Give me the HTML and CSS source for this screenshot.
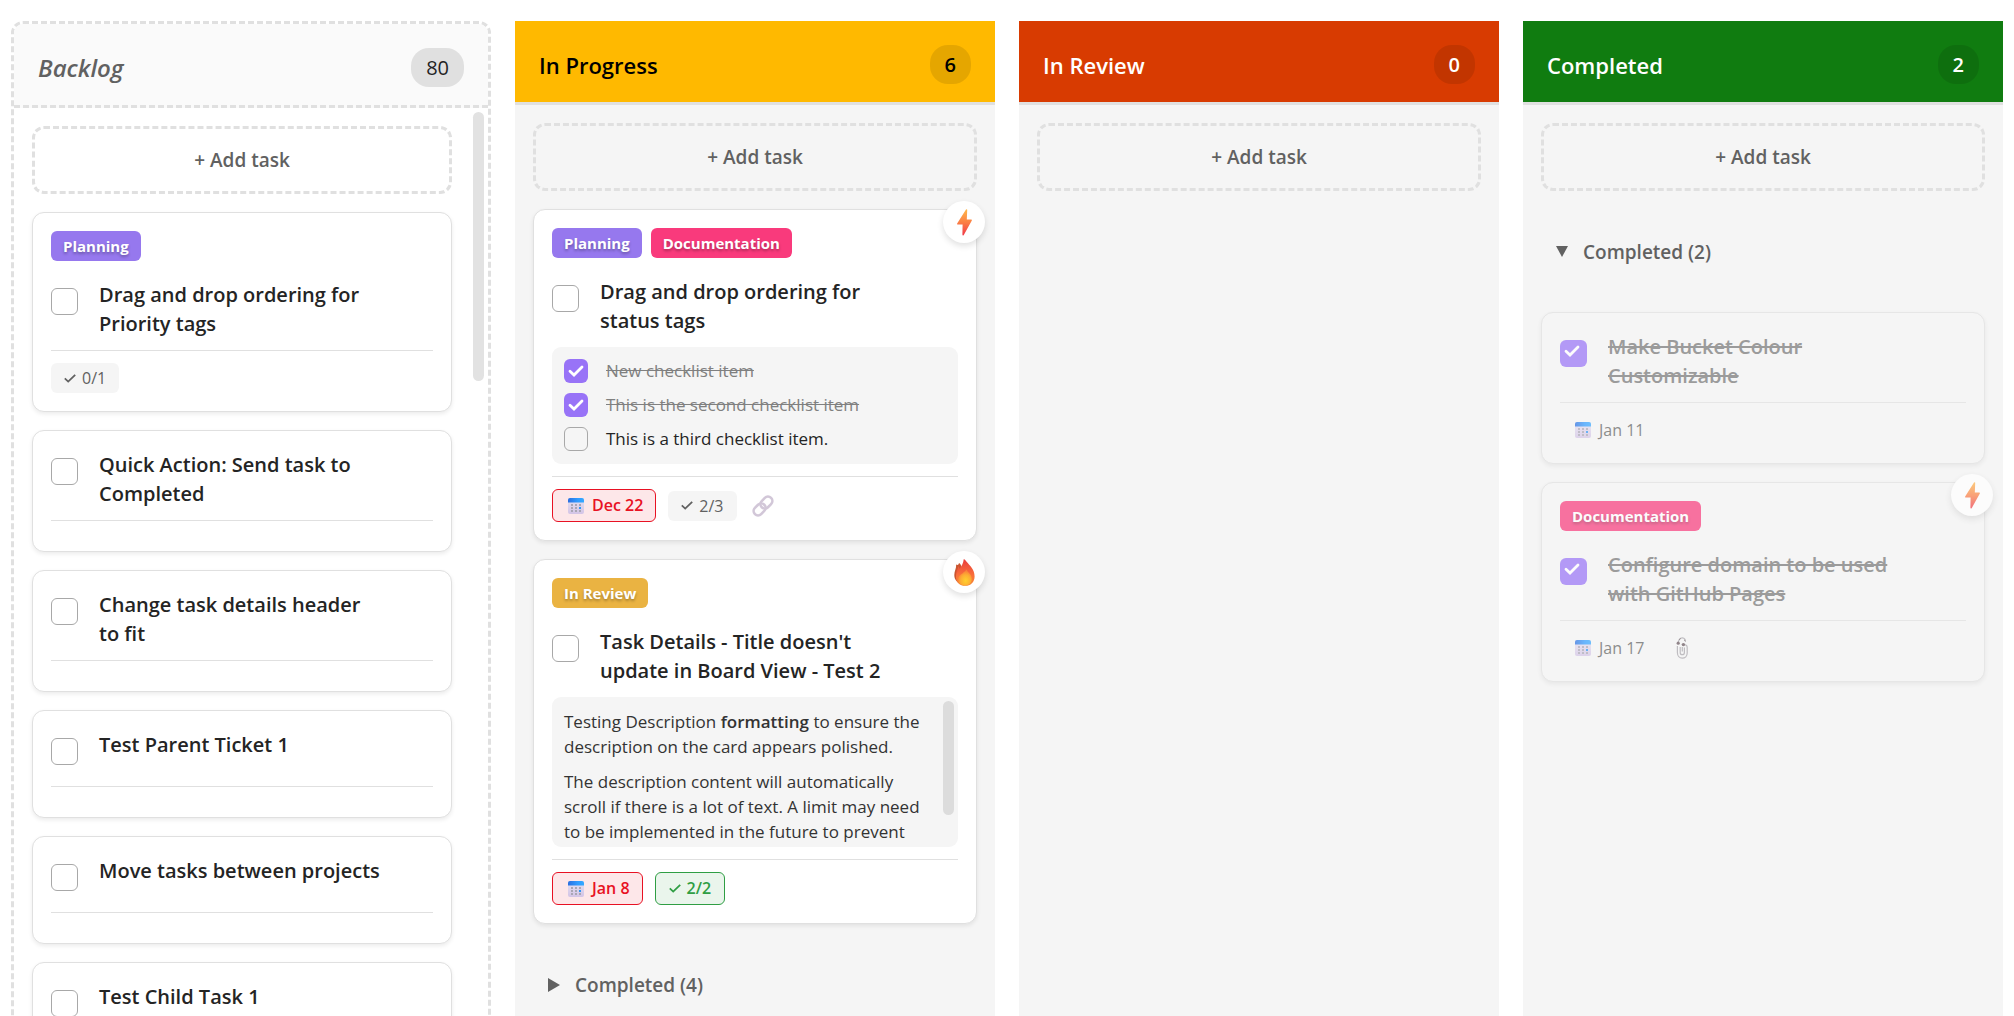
FILE: index.html
```html
<!DOCTYPE html>
<html lang="en">
<head>
    <meta charset="UTF-8">
    <meta name="viewport" content="width=device-width, initial-scale=1.0">
    <title>Task Board</title>
    <link rel="stylesheet" href="styles.css">
</head>
<body>

<!-- Shared icons -->
<svg class="sprite" aria-hidden="true">
    <defs>
        <linearGradient id="boltFill" x1="0" y1="0" x2="0" y2="1">
            <stop offset="0" stop-color="#ffb84a"/>
            <stop offset="0.5" stop-color="#fb7f45"/>
            <stop offset="1" stop-color="#f0384a"/>
        </linearGradient>
        <linearGradient id="flameFill" x1="0" y1="0" x2="0" y2="1">
            <stop offset="0" stop-color="#ea3c3c"/>
            <stop offset="0.6" stop-color="#f9703a"/>
            <stop offset="1" stop-color="#f58a35"/>
        </linearGradient>
        <radialGradient id="flameCore" cx="0.55" cy="0.7" r="0.6">
            <stop offset="0" stop-color="#ffd02f"/>
            <stop offset="0.6" stop-color="#fdae33"/>
            <stop offset="1" stop-color="#fb8238"/>
        </radialGradient>
        <linearGradient id="calTop" x1="0" y1="0" x2="1" y2="0">
            <stop offset="0" stop-color="#2b6fe0"/>
            <stop offset="0.6" stop-color="#2f9bff"/>
            <stop offset="1" stop-color="#36a8ff"/>
        </linearGradient>
        <linearGradient id="calBody" x1="0" y1="0" x2="0" y2="1">
            <stop offset="0" stop-color="#e6e2f1"/>
            <stop offset="1" stop-color="#d3c4e6"/>
        </linearGradient>
    </defs>
    <symbol id="bolt" viewBox="0 0 15 27">
        <path fill="url(#boltFill)" d="M9 0.5 Q10.3 -0.3 10.2 1.2 L9.8 10.5 H14.2 Q15.4 10.6 14.7 11.8 L6.8 26 Q5.6 27.4 5.4 25.6 L5.6 15.6 H0.9 Q-0.3 15.5 0.3 14.3 Z"/>
    </symbol>
    <symbol id="flame" viewBox="0 0 21 27">
        <path fill="#c9552f" d="M5 4 C8 6 8 10 8 14 L8 25 C3 24 0.3 20.5 0.3 16 C0.3 12 2.4 9.5 2.2 5.6 C4 6.6 4.6 5.5 5 4 Z"/>
        <path fill="#ef5a3c" d="M4.2 7 C6 9 5.5 11 7 12 L7 22 C3 20 1.4 17 2.2 13.4 C2.6 11 4.5 9.5 4.2 7 Z"/>
        <path fill="url(#flameFill)" d="M9.7 0.2 C11 0 11.4 1.2 12.4 2.6 C16 7 20.6 10.6 20.6 17.4 C20.6 23 16.6 26.8 11.2 26.8 C5.8 26.8 2 23.4 2 18 C2 11.6 9.2 8.4 9.7 0.2 Z"/>
        <path fill="url(#flameCore)" d="M12.6 10.5 C13.4 13.4 17.8 15 17.8 20 C17.8 24 15 26.4 11 26.4 C7 26.4 4.2 24 4.2 20.4 C4.2 16 8 15.6 9.4 13.6 C10.2 12.6 11.6 12 12.6 10.5 Z"/>
    </symbol>
    <symbol id="calendar" viewBox="0 0 16 16">
        <rect x="0" y="0" width="16" height="16" rx="2" fill="url(#calBody)"/>
        <path fill="url(#calTop)" d="M2 0 H14 Q16 0 16 2 V4.5 H0 V2 Q0 0 2 0 Z"/>
        <g fill="#aaa6b4">
            <rect x="3" y="6" width="2" height="2"/><rect x="7" y="6" width="2" height="2"/><rect x="11" y="6" width="2" height="2"/>
            <rect x="3" y="9" width="2" height="2"/><rect x="7" y="9" width="2" height="2"/>
            <rect x="3" y="12" width="2" height="2"/><rect x="7" y="12" width="2" height="2"/><rect x="11" y="12" width="2" height="2"/>
        </g>
        <rect x="11" y="9" width="2" height="2" fill="#2f95f5"/>
    </symbol>
    <symbol id="check" viewBox="0 0 12 9">
        <path fill="none" stroke="currentColor" stroke-width="1.8" d="M0.8 4.4 L4.2 7.6 L11.2 0.8"/>
    </symbol>
    <symbol id="link" viewBox="0 0 22 22">
        <g fill="none" stroke="#d2c7d8" stroke-width="2.6">
            <rect x="-6.6" y="-4.4" width="13.2" height="8.8" rx="4.4" transform="translate(14.4 7.6) rotate(-45)"/>
            <rect x="-6.6" y="-4.4" width="13.2" height="8.8" rx="4.4" transform="translate(7.6 14.4) rotate(-45)"/>
        </g>
    </symbol>
    <symbol id="clip" viewBox="0 0 12 22">
        <path fill="none" stroke="#a9a6ac" stroke-width="1.2" d="M2.4 7 C2 3 4 0.8 6.4 0.9 C8.6 1 9.6 2.6 9.4 4.6 M1.4 9 V15.6 C1.4 19 3.6 21.2 6.2 21.2 C9 21.2 11.2 19.2 11.2 16 V10.4 C11.2 8.4 9.6 7.6 8.4 7.8 M4.2 10 V15.4 C4.2 18.4 8.4 18.4 8.4 15.4 V10.6 M6.3 10 V14.6"/>
        <circle cx="2.2" cy="6.2" r="1.6" fill="#66555c"/>
        <circle cx="7.4" cy="7.6" r="1.7" fill="#66555c"/>
        <path fill="none" stroke="#66555c" stroke-width="1" d="M3.2 2.6 L4.6 1.6 M8.2 3 L9.4 4"/>
    </symbol>
    <symbol id="triangle" viewBox="0 0 12 12">
        <path fill="currentColor" d="M0 0 H12 L6 11 Z"/>
    </symbol>
    <symbol id="triangle-right" viewBox="0 0 12 14">
        <path fill="currentColor" d="M0 0 L12 7 L0 14 Z"/>
    </symbol>
</svg>

<main class="board">

    <section class="column column-backlog">
        <header class="column-header">
            <h2>Backlog</h2>
            <span class="count">80</span>
        </header>
        <div class="column-scroll">
            <div class="column-body">
                <button class="add-task">+ Add task</button>

                <article class="card">
                    <div class="tags"><span class="tag tag-purple">Planning</span></div>
                    <div class="card-title">
                        <input type="checkbox" id="b1">
                        <label for="b1">Drag and drop ordering for Priority tags</label>
                    </div>
                    <footer class="card-footer">
                        <span class="badge"><svg class="icon-check"><use href="#check"/></svg>0/1</span>
                    </footer>
                </article>

                <article class="card">
                    <div class="card-title">
                        <input type="checkbox" id="b2">
                        <label for="b2">Quick Action: Send task to Completed</label>
                    </div>
                    <footer class="card-footer"></footer>
                </article>

                <article class="card">
                    <div class="card-title">
                        <input type="checkbox" id="b3">
                        <label for="b3">Change task details header to fit</label>
                    </div>
                    <footer class="card-footer"></footer>
                </article>

                <article class="card">
                    <div class="card-title">
                        <input type="checkbox" id="b4">
                        <label for="b4">Test Parent Ticket 1</label>
                    </div>
                    <footer class="card-footer"></footer>
                </article>

                <article class="card">
                    <div class="card-title">
                        <input type="checkbox" id="b5">
                        <label for="b5">Move tasks between projects</label>
                    </div>
                    <footer class="card-footer"></footer>
                </article>

                <article class="card">
                    <div class="card-title">
                        <input type="checkbox" id="b6">
                        <label for="b6">Test Child Task 1</label>
                    </div>
                    <footer class="card-footer"></footer>
                </article>
            </div>
            <div class="scrollbar"><div class="thumb thumb-column"></div></div>
        </div>
    </section>

    <section class="column">
        <header class="column-header header-progress">
            <h2>In Progress</h2>
            <span class="count">6</span>
        </header>
        <div class="column-body">
            <button class="add-task">+ Add task</button>

            <article class="card">
                <span class="priority"><svg class="icon-bolt"><use href="#bolt"/></svg></span>
                <div class="tags">
                    <span class="tag tag-purple">Planning</span>
                    <span class="tag tag-pink">Documentation</span>
                </div>
                <div class="card-title">
                    <input type="checkbox" id="p1">
                    <label for="p1">Drag and drop ordering for status tags</label>
                </div>
                <ul class="checklist">
                    <li><input type="checkbox" id="c1" checked><label for="c1">New checklist item</label></li>
                    <li><input type="checkbox" id="c2" checked><label for="c2">This is the second checklist item</label></li>
                    <li><input type="checkbox" id="c3"><label for="c3">This is a third checklist item.</label></li>
                </ul>
                <footer class="card-footer">
                    <span class="badge date overdue"><svg class="icon-calendar"><use href="#calendar"/></svg>Dec 22</span>
                    <span class="badge"><svg class="icon-check"><use href="#check"/></svg>2/3</span>
                    <span class="attachment"><svg class="icon-link"><use href="#link"/></svg></span>
                </footer>
            </article>

            <article class="card">
                <span class="priority"><svg class="icon-flame"><use href="#flame"/></svg></span>
                <div class="tags"><span class="tag tag-gold">In Review</span></div>
                <div class="card-title">
                    <input type="checkbox" id="p2">
                    <label for="p2">Task Details - Title doesn't update in Board View - Test 2</label>
                </div>
                <div class="description">
                    <div class="description-text">
                        <p>Testing Description <strong>formatting</strong> to ensure the description on the card appears polished.</p>
                        <p>The description content will automatically scroll if there is a lot of text. A limit may need to be implemented in the future to prevent</p>
                    </div>
                    <div class="scrollbar"><div class="thumb thumb-description"></div></div>
                </div>
                <footer class="card-footer">
                    <span class="badge date overdue"><svg class="icon-calendar"><use href="#calendar"/></svg>Jan 8</span>
                    <span class="badge all-done"><svg class="icon-check"><use href="#check"/></svg>2/2</span>
                </footer>
            </article>

            <button class="toggle" aria-expanded="false"><svg class="icon-triangle-right"><use href="#triangle-right"/></svg>Completed (4)</button>
        </div>
    </section>

    <section class="column">
        <header class="column-header header-review">
            <h2>In Review</h2>
            <span class="count">0</span>
        </header>
        <div class="column-body">
            <button class="add-task">+ Add task</button>
        </div>
    </section>

    <section class="column">
        <header class="column-header header-completed">
            <h2>Completed</h2>
            <span class="count">2</span>
        </header>
        <div class="column-body">
            <button class="add-task">+ Add task</button>

            <button class="toggle" aria-expanded="true"><svg class="icon-triangle"><use href="#triangle"/></svg>Completed (2)</button>

            <article class="card card-done">
                <div class="card-title">
                    <input type="checkbox" id="d1" checked>
                    <label for="d1">Make Bucket Colour Customizable</label>
                </div>
                <footer class="card-footer">
                    <span class="badge date"><svg class="icon-calendar"><use href="#calendar"/></svg>Jan 11</span>
                </footer>
            </article>

            <article class="card card-done">
                <span class="priority"><svg class="icon-bolt"><use href="#bolt"/></svg></span>
                <div class="tags"><span class="tag tag-pink">Documentation</span></div>
                <div class="card-title">
                    <input type="checkbox" id="d2" checked>
                    <label for="d2">Configure domain to be used with GitHub Pages</label>
                </div>
                <footer class="card-footer">
                    <span class="badge date"><svg class="icon-calendar"><use href="#calendar"/></svg>Jan 17</span>
                    <span class="attachment"><svg class="icon-clip"><use href="#clip"/></svg></span>
                </footer>
            </article>
        </div>
    </section>

</main>

</body>
</html>
```
FILE: styles.css
```css
* {
    box-sizing: border-box;
}
body {
    margin: 0;
    font-family: "Open Sans", "Noto Sans", sans-serif;
    color: #242424;
    background-color: #fff;
}
.sprite {
    position: absolute;
    width: 0;
    height: 0;
}

/* Board and columns */
.board {
    display: grid;
    grid-template-columns: repeat(4, 1fr);
    gap: 24px;
    height: 100vh;
    padding: 21px 11px 0;
    overflow: hidden;
}
.column {
    min-width: 0;
    background-color: #f5f5f5;
}
.column-header {
    display: flex;
    align-items: center;
    justify-content: space-between;
    padding: 24px 24px 18px;
    border-bottom: 3px solid #e0e0e0;
}
.column-header h2 {
    margin: 0;
    font-size: 22px;
    line-height: 30px;
    font-weight: 600;
}
.count {
    padding: 0 15px;
    border-radius: 18px;
    font-size: 20px;
    line-height: 39px;
    font-weight: 600;
    background-color: rgba(0, 0, 0, 0.1);
}
.header-progress {
    color: #000;
    background-color: #ffb900;
}
.header-review {
    color: #fff;
    background-color: #d83b01;
}
.header-completed {
    color: #fff;
    background-color: #107c10;
}
.column-body {
    display: flex;
    flex-direction: column;
    gap: 18px;
    padding: 18px;
}

.column-backlog {
    border: 3px dashed #e0e0e0;
    border-bottom: none;
    border-radius: 12px 12px 0 0;
    background-color: #fff;
}
.column-backlog .column-header {
    border-bottom-style: dashed;
    border-radius: 9px 9px 0 0;
    background-color: #fafafa;
}
.column-backlog .column-header h2 {
    font-size: 24px;
    font-style: italic;
    color: #616161;
}
.column-backlog .count {
    font-weight: 500;
    background-color: #e0e0e0;
}
.column-scroll {
    display: flex;
}
.column-scroll .column-body {
    flex: 1;
}

/* Scrollbars */
.scrollbar {
    padding: 4px 4px 4px 3px;
}
.thumb {
    width: 11px;
    border-radius: 6px;
}
.thumb-column {
    height: 269px;
    background-color: #e2e2e2;
}
.thumb-description {
    height: 114px;
    background-color: #dcdcdc;
}

.add-task {
    height: 68px;
    border: 3px dashed #e0e0e0;
    border-radius: 12px;
    background: none;
    font-family: inherit;
    font-size: 19px;
    font-weight: 600;
    color: #616161;
    cursor: pointer;
}

/* Cards */
.card {
    position: relative;
    padding: 18px;
    border: 1px solid #e0e0e0;
    border-radius: 12px;
    background-color: #fff;
    box-shadow: 0 2px 4px rgba(0, 0, 0, 0.08);
}
.priority {
    position: absolute;
    top: -9px;
    right: -9px;
    display: flex;
    align-items: center;
    justify-content: center;
    width: 42px;
    height: 42px;
    border-radius: 50%;
    background-color: #fff;
    box-shadow: 0 3px 6px rgba(0, 0, 0, 0.12);
}
.tags {
    display: flex;
    gap: 9px;
    margin-bottom: 18px;
}
.tag {
    padding: 0 12px;
    border-radius: 6px;
    font-size: 15px;
    line-height: 30px;
    font-weight: 700;
    color: #fff;
    text-shadow: 0 2px 3px rgba(0, 0, 0, 0.3);
}
.tag-purple {
    background-color: #9678ee;
}
.tag-pink {
    background-color: #f93a7c;
}
.tag-gold {
    background-color: #eab342;
}
.card-title {
    display: flex;
    align-items: flex-start;
    gap: 21px;
    padding-right: 51px;
    margin-bottom: 12px;
    font-size: 20px;
    line-height: 29px;
    font-weight: 600;
}
.card-title label {
    padding-top: 1px;
}

input[type="checkbox"] {
    appearance: none;
    flex: none;
    width: 27px;
    height: 27px;
    margin: 9px 0;
    border: 1px solid #a8a8a8;
    border-radius: 6px;
    cursor: pointer;
}
input[type="checkbox"]:checked {
    border: none;
    background: #9873f7 url("data:image/svg+xml,%3Csvg xmlns='http://www.w3.org/2000/svg' width='16' height='12'%3E%3Cpath d='M2 6.2 L6 10 L14 2' fill='none' stroke='white' stroke-width='2.8' stroke-linecap='round'/%3E%3C/svg%3E") no-repeat center;
}

.checklist {
    display: flex;
    flex-direction: column;
    gap: 10px;
    margin: 0 0 12px;
    padding: 12px 12px 13px;
    border-radius: 9px;
    background-color: #f5f5f5;
    list-style: none;
}
.checklist li {
    display: flex;
    gap: 18px;
    font-size: 17px;
    line-height: 24px;
}
.checklist input[type="checkbox"] {
    width: 24px;
    height: 24px;
    margin: 0;
}
.checklist input:checked + label {
    color: #808080;
    text-decoration: line-through;
}

.description {
    display: flex;
    height: 150px;
    margin-bottom: 12px;
    border-radius: 9px;
    background-color: #f5f5f5;
    overflow: hidden;
}
.description-text {
    flex: 1;
    padding: 12px 12px 0;
    font-size: 17px;
    line-height: 25px;
    color: #333;
}
.description-text p {
    margin: 0 0 10px;
}
.description-text strong {
    font-weight: 600;
}

.card-footer {
    display: flex;
    align-items: center;
    gap: 12px;
    padding-top: 12px;
    border-top: 1px solid #e0e0e0;
}
.badge {
    display: flex;
    align-items: center;
    gap: 6px;
    padding: 0 13px;
    border-radius: 6px;
    font-size: 16px;
    line-height: 30px;
    font-weight: 500;
    color: #616161;
    background-color: #f5f5f5;
}
.date {
    gap: 8px;
    padding: 0 12px 0 15px;
    background: none;
}
.overdue {
    border: 1px solid #e81123;
    line-height: 31px;
    font-weight: 600;
    color: #e81123;
    background-color: #fde7e9;
}
.all-done {
    border: 1px solid #2f9e44;
    line-height: 31px;
    font-weight: 600;
    color: #2f9e44;
    background-color: #eaf5ec;
}
.attachment {
    display: flex;
    justify-content: center;
    width: 28px;
}

/* Completed tasks */
.toggle {
    display: flex;
    align-items: center;
    gap: 15px;
    height: 85px;
    padding: 0 15px;
    border: none;
    background: none;
    font-family: inherit;
    font-size: 19px;
    font-weight: 600;
    color: #616161;
    cursor: pointer;
}
.card-done {
    background-color: #f5f5f5;
    opacity: 0.7;
}
.card-done .card-title {
    color: #757575;
    text-decoration: line-through;
}
.card-done .card-title input:checked {
    background-position: 4px 5px;
}

/* Icons */
.icon-bolt {
    width: 15px;
    height: 27px;
}
.icon-flame {
    width: 21px;
    height: 27px;
}
.icon-calendar {
    width: 16px;
    height: 16px;
}
.icon-check {
    width: 12px;
    height: 9px;
}
.icon-link {
    width: 22px;
    height: 22px;
}
.icon-clip {
    width: 12px;
    height: 22px;
}
.icon-triangle {
    width: 12px;
    height: 12px;
}
.icon-triangle-right {
    width: 12px;
    height: 14px;
}
```
